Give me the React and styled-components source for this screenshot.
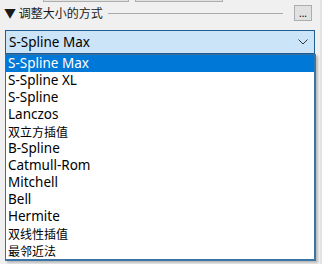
import React from 'react';
import styled, { createGlobalStyle } from 'styled-components';

const Global = createGlobalStyle`
  html, body {
    margin: 0;
    padding: 0;
    background: #f0f0f0;
  }
  body {
    font-family: "Noto Sans", "Noto Sans CJK SC", sans-serif;
    overflow: hidden;
  }
`;

const Panel = styled.div`
  width: 322px;
  height: 264px;
  box-sizing: border-box;
  border-right: 2px solid #e3e3e3;
  background: #f0f0f0;
`;

const TopStub = styled.div`
  height: 2px;
  display: flex;
  padding-left: 43px;
  gap: 6px;
`;

const StubButton = styled.div`
  width: ${(p) => p.w}px;
  height: 1px;
  border: 1px solid #adadad;
  border-top: none;
  background: #e1e1e1;
`;

const Header = styled.div`
  display: flex;
  align-items: center;
  height: 18px;
  margin-top: 2px;
  padding: 0 8px 0 4px;
`;

const Title = styled.span`
  font-family: "Noto Sans CJK SC", sans-serif;
  font-size: 12px;
  color: #1a1a1a;
  line-height: 16px;
  white-space: nowrap;
`;

const Rule = styled.div`
  flex: 1;
  height: 1px;
  background: #a9a9a9;
  margin: 0 11px 0 5px;
`;

const DotsButton = styled.button`
  width: 18px;
  height: 16px;
  border: 1px solid #adadad;
  background: #e1e1e1;
  font-family: "Noto Sans", sans-serif;
  font-size: 10px;
  line-height: 10px;
  color: #000;
  display: flex;
  align-items: flex-end;
  justify-content: center;
  padding: 0 0 2px;
  box-sizing: border-box;
`;

const Combo = styled.div`
  margin: 8px 0 0 5px;
  width: 310px;
  height: 24px;
  box-sizing: border-box;
  border: 1px solid #1f5c91;
  background: #cce4f7;
  display: flex;
  align-items: center;
  justify-content: space-between;
  padding: 0 6px 0 3px;
`;

const ComboText = styled.span`
  font-size: 13.5px;
  color: #000;
`;

const List = styled.div`
  margin-left: 5px;
  width: 311px;
  box-sizing: border-box;
  border: 1px solid #3b6f9e;
  border-right: 2px solid #3d74a6;
  border-bottom: 2px solid #3d74a6;
  background: #fff;
  box-shadow: 2px 2px 2px rgba(0, 0, 0, 0.22);
`;

const Item = styled.div`
  height: 17px;
  line-height: 17px;
  overflow: hidden;
  padding-left: 2px;
  font-size: ${(p) => (p.cjk ? '12px' : '13.5px')};
  font-family: ${(p) => (p.cjk ? '"Noto Sans CJK SC", sans-serif' : '"Noto Sans", sans-serif')};
  color: ${(p) => (p.selected ? '#fff' : '#000')};
  background: ${(p) => (p.selected ? '#0078d7' : 'transparent')};
  white-space: nowrap;
`;

const items = [
  ['S-Spline Max'],
  ['S-Spline XL'],
  ['S-Spline'],
  ['Lanczos'],
  ['双立方插值', true],
  ['B-Spline'],
  ['Catmull-Rom'],
  ['Mitchell'],
  ['Bell'],
  ['Hermite'],
  ['双线性插值', true],
  ['最邻近法', true],
];

export default function App() {
  return (
    <Panel>
      <Global />
      <TopStub>
        <StubButton w={84} />
        <StubButton w={86} />
      </TopStub>
      <Header>
        <Title>▼ 调整大小的方式</Title>
        <Rule />
        <DotsButton>...</DotsButton>
      </Header>
      <Combo>
        <ComboText>S-Spline Max</ComboText>
        <svg width="10" height="6" viewBox="0 0 10 6">
          <path d="M0.5 0.5 L5 5 L9.5 0.5" fill="none" stroke="#333" strokeWidth="1" />
        </svg>
      </Combo>
      <List>
        {items.map(([label, cjk], i) => (
          <Item key={label} cjk={cjk} selected={i === 0}>{label}</Item>
        ))}
      </List>
    </Panel>
  );
}
